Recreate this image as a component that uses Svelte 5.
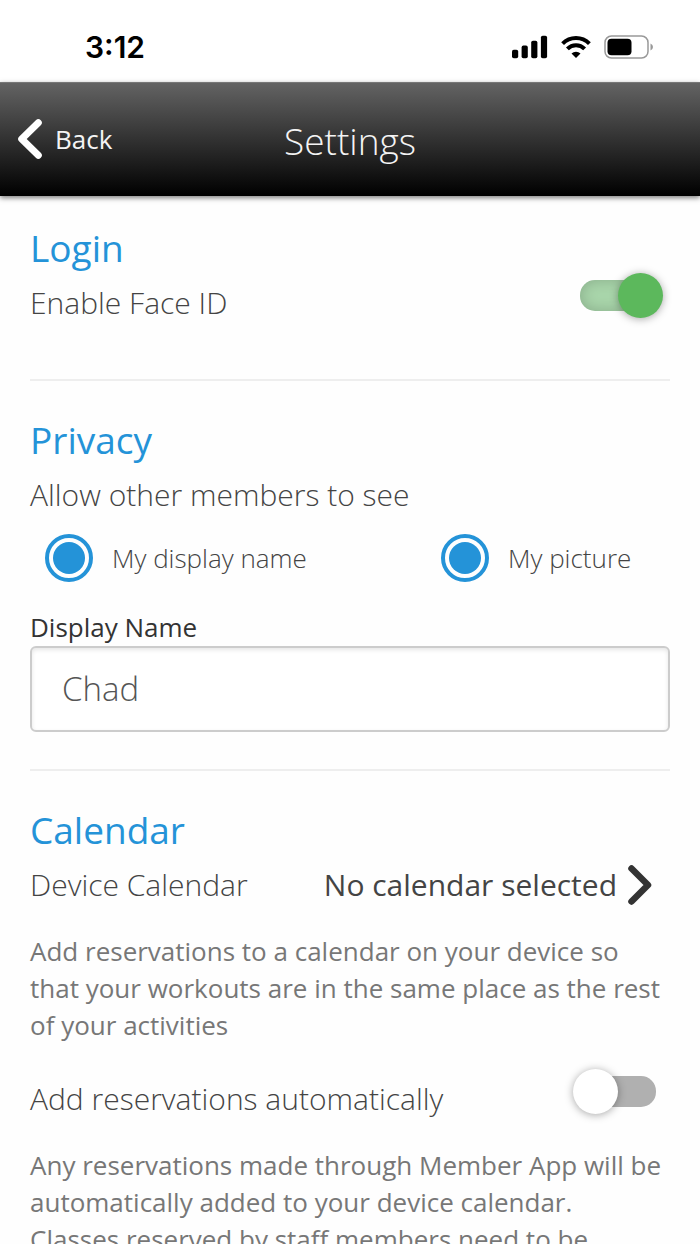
<script>
  let faceId = $state(true);
  let showName = $state(true);
  let showPicture = $state(true);
  let autoAdd = $state(false);
  let displayName = $state('Chad');
</script>

<div class="screen">
  <div class="status">
    <span class="time">3:12</span>
    <div class="indicators">
      <svg width="36" height="24" viewBox="0 0 36 24" aria-hidden="true">
        <rect x="0" y="14.8" width="6.2" height="8.4" rx="1.8" />
        <rect x="9.6" y="10.6" width="6.2" height="12.6" rx="1.8" />
        <rect x="19.2" y="5.7" width="6.2" height="17.5" rx="1.8" />
        <rect x="28.9" y="0.8" width="6.2" height="22.4" rx="1.8" />
      </svg>
      <svg width="30" height="24" viewBox="0 0 30 24" aria-hidden="true">
        <g fill="none" stroke="#000" stroke-width="4">
          <path d="M1.6 8.6 A19 19 0 0 1 28.4 8.6" />
          <path d="M6.4 13.9 A12 12 0 0 1 23.6 13.9" />
        </g>
        <path d="M15 23 L10.5 18.5 A6.4 6.4 0 0 1 19.5 18.5 Z" />
      </svg>
      <svg width="50" height="24" viewBox="0 0 50 24" aria-hidden="true">
        <rect x="1" y="1" width="43" height="22" rx="6.5" fill="none" stroke="#999" stroke-width="1.5" />
        <rect x="3.5" y="3.7" width="24" height="16.6" rx="4" />
        <path d="M46.5 8.5 Q49 9.6 49 12 Q49 14.4 46.5 15.5 Z" fill="#999" />
      </svg>
    </div>
  </div>

  <header>
    <button class="back" type="button">
      <svg width="26" height="42" viewBox="0 0 26 42" aria-hidden="true">
        <path d="M21.3 4.7 L4.7 21 L21.3 37.3" fill="none" stroke="#fff" stroke-width="7" stroke-linecap="round" stroke-linejoin="round" />
      </svg>
      Back
    </button>
    <h1>Settings</h1>
  </header>

  <main>
    <section>
      <h2>Login</h2>
      <div class="row">
        <label for="face">Enable Face ID</label>
        <input id="face" class="switch" type="checkbox" role="switch" bind:checked={faceId} />
      </div>
    </section>

    <section>
      <h2>Privacy</h2>
      <div class="row" id="visible">Allow other members to see</div>
      <div class="choices" role="group" aria-labelledby="visible">
        <label><input class="dot" type="checkbox" bind:checked={showName} />My display name</label>
        <label><input class="dot" type="checkbox" bind:checked={showPicture} />My picture</label>
      </div>
      <label class="caption" for="name">Display Name</label>
      <input id="name" class="field" type="text" bind:value={displayName} />
    </section>

    <section>
      <h2>Calendar</h2>
      <div class="row">
        <span>Device Calendar</span>
        <button class="picker" type="button">
          No calendar selected
          <svg width="26" height="42" viewBox="0 0 26 42" aria-hidden="true">
            <path d="M4.5 4.5 L21 21 L4.5 37.5" fill="none" stroke="#333" stroke-width="6.5" stroke-linecap="round" stroke-linejoin="round" />
          </svg>
        </button>
      </div>
      <p>Add reservations to a calendar on your device so that your workouts are in the same place as the rest of your activities</p>
      <div class="row spaced">
        <label for="auto">Add reservations automatically</label>
        <input id="auto" class="switch" type="checkbox" role="switch" bind:checked={autoAdd} />
      </div>
      <p>Any reservations made through Member App will be automatically added to your device calendar. Classes reserved by staff members need to be</p>
    </section>
  </main>
</div>

<style>
  :global(body) {
    margin: 0;
    background: #fff;
  }

  .screen {
    display: flex;
    flex-direction: column;
    height: 100vh;
    font-family: 'Open Sans', sans-serif;
    color: #444;
    background: #fefefe;
  }

  .screen *,
  .screen *::before,
  .screen *::after {
    box-sizing: border-box;
  }

  h1,
  h2,
  p {
    margin: 0;
  }

  button {
    display: flex;
    align-items: center;
    padding: 0;
    border: 0;
    background: none;
    font-family: inherit;
    cursor: pointer;
  }

  .status {
    display: flex;
    flex: none;
    align-items: center;
    justify-content: space-between;
    padding: 29px 46px 17px 85px;
    background: #fff;
  }

  .time {
    font: 600 30px/36px Inter, sans-serif;
    color: #000;
  }

  .indicators {
    display: flex;
    gap: 13px;
  }

  header {
    position: relative;
    z-index: 1;
    display: grid;
    grid-template-columns: 1fr auto 1fr;
    flex: none;
    align-items: start;
    padding: 30px 17px 28px;
    background: linear-gradient(#636363, #000);
    border-top: 1px solid #777;
    box-shadow: 0 2px 5px rgba(0, 0, 0, 0.5);
  }

  .back {
    gap: 12px;
    font-size: 26px;
    line-height: 52px;
    color: #f4f4f4;
  }

  h1 {
    font-size: 37px;
    font-weight: 300;
    line-height: 55px;
    color: #f4f4f4;
  }

  main {
    flex: 1;
    min-height: 0;
    padding: 27px 30px 0;
    overflow-y: auto;
    scrollbar-width: none;
  }

  section + section {
    margin-top: 37px;
    padding-top: 34px;
    border-top: 2px solid #eee;
  }

  section:first-child {
    padding-bottom: 9px;
  }

  h2 {
    font-size: 37px;
    font-weight: 400;
    line-height: 50px;
    color: #2493d8;
  }

  .row {
    display: flex;
    align-items: flex-start;
    justify-content: space-between;
    font-size: 30px;
    font-weight: 300;
    line-height: 60px;
  }

  .spaced {
    margin-top: 25px;
  }

  .switch {
    position: relative;
    width: 90px;
    height: 45px;
    margin: 0 7px 0 0;
    appearance: none;
    cursor: pointer;
  }

  .switch::before {
    content: '';
    position: absolute;
    inset: 7px;
    border-radius: 15px;
    background: #b0b0b0;
  }

  .switch::after {
    content: '';
    position: absolute;
    top: 0;
    left: 0;
    width: 45px;
    height: 45px;
    border-radius: 50%;
    background: #fff;
    box-shadow: 0 1px 8px rgba(0, 0, 0, 0.35);
  }

  .switch:checked::before {
    background: #a9d6ab;
    box-shadow: inset 0 0 15px rgba(0, 0, 0, 0.2);
  }

  .switch:checked::after {
    left: 45px;
    background: #5cb85c;
  }

  .choices {
    display: grid;
    grid-template-columns: 396fr 244fr;
    margin-top: 9px;
    font-size: 26px;
    font-weight: 300;
    line-height: 48px;
  }

  .choices label {
    display: flex;
    align-items: center;
    gap: 19px;
    padding-left: 15px;
  }

  .dot {
    width: 48px;
    height: 48px;
    margin: 0;
    padding: 4px;
    border: 4px solid #2493d8;
    border-radius: 50%;
    appearance: none;
    cursor: pointer;
  }

  .dot:checked {
    background: #2493d8 content-box;
  }

  .caption {
    display: block;
    margin: 28px 0 2px;
    font-size: 26px;
    line-height: 34px;
    color: #333;
  }

  .field {
    display: block;
    width: 100%;
    padding: 17px 30px;
    border: 2px solid #ccc;
    border-radius: 6px;
    background: #fff;
    box-shadow: inset 0 2px 4px rgba(0, 0, 0, 0.1);
    font-family: inherit;
    font-size: 33px;
    font-weight: 300;
    line-height: 48px;
    color: #555;
  }

  .picker {
    gap: 10px;
    padding-right: 17px;
    font-size: 30px;
    line-height: 60px;
    color: #444;
  }

  p {
    margin-top: 18px;
    padding-right: 5px;
    font-size: 26px;
    line-height: 37px;
    color: #777;
  }
</style>
